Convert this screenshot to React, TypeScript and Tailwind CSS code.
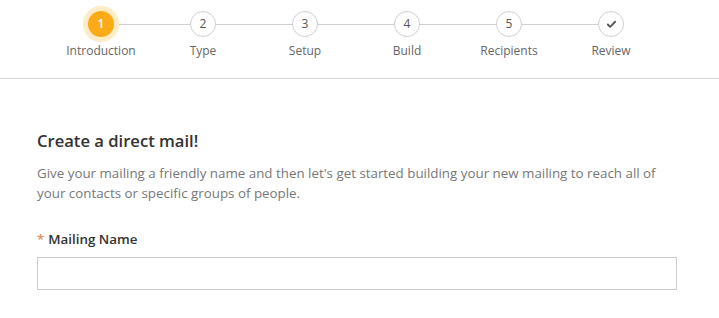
import { Check } from "lucide-react";

const steps = ["Introduction", "Type", "Setup", "Build", "Recipients", "Review"];

export default function App() {
  return (
    <div className="w-[719px] h-[318px] bg-white overflow-hidden" style={{ fontFamily: '"Open Sans", sans-serif' }}>
      {/* Stepper */}
      <div className="h-[79px] border-b border-[#d6d6d6]">
        <div className="flex ml-[50px] pt-[11px]">
          {steps.map((label, i) => (
            <div key={label} className="relative w-[102px] flex flex-col items-center">
              {i < steps.length - 1 && (
                <div className="absolute left-[51px] top-[13px] w-[102px] h-px bg-[#d0d0d0]" />
              )}
              {i === 0 ? (
                <div className="relative z-10 w-[26px] h-[26px] rounded-full bg-[#fbab18] ring-[5px] ring-[#fdecc6] flex items-center justify-center text-[12px] font-semibold text-white">
                  1
                </div>
              ) : (
                <div className="relative z-10 w-[26px] h-[26px] rounded-full bg-white border border-[#cfcfcf] flex items-center justify-center text-[12px] text-[#555]">
                  {i === steps.length - 1 ? <Check size={11} strokeWidth={4} className="text-[#555]" /> : i + 1}
                </div>
              )}
              <div className="mt-[6px] text-[12px] leading-4 text-[#666]">{label}</div>
            </div>
          ))}
        </div>
      </div>

      {/* Content */}
      <div className="px-[37px] pt-[51px]">
        <h2 className="text-[16.6px] leading-[22px] font-semibold text-[#333]">Create a direct mail!</h2>
        <p className="mt-[11px] w-[640px] text-[13.35px] leading-[20px] text-[#777]">
          Give your mailing a friendly name and then let's get started building your new mailing to reach all of your
          contacts or specific groups of people.
        </p>
        <label className="block mt-[27px] text-[13.35px] leading-[18px] font-semibold text-[#333]">
          <span className="text-[#ec8a55] mr-1">*</span>Mailing Name
        </label>
        <input type="text" className="block mt-[9px] w-[640px] h-[33px] border border-[#cccccc] outline-none px-2 text-[13px]" />
      </div>
    </div>
  );
}
